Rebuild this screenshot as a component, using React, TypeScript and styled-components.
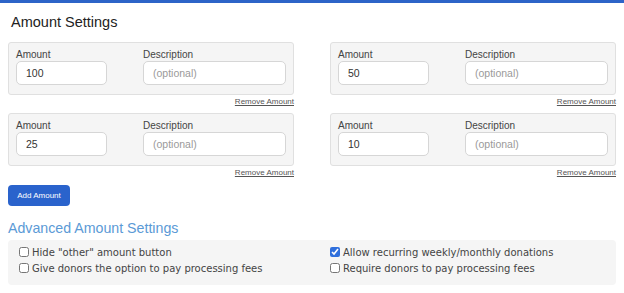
import styled, { createGlobalStyle } from "styled-components";

const GlobalStyle = createGlobalStyle`
  html, body {
    margin: 0;
    padding: 0;
    background: #fff;
  }
  body {
    font-family: "Liberation Sans", Arial, sans-serif;
    color: #333;
  }
`;

const TopBar = styled.div`
  height: 3px;
  background: #2d64c8;
`;

const Page = styled.div`
  width: 608px;
  padding: 0 8px;
`;

const Title = styled.h2`
  margin: 10px 0 0 3px;
  font-size: 14.5px;
  line-height: 18px;
  font-weight: 400;
  color: #222;
`;

const AmountGrid = styled.div`
  display: grid;
  grid-template-columns: 286px 286px;
  column-gap: 36px;
  margin-top: 11px;
`;

const AmountItem = styled.div`
  display: flex;
  flex-direction: column;
`;

const Card = styled.div`
  display: grid;
  grid-template-columns: 91px 143px;
  column-gap: 36px;
  padding: 6px 7px 9px;
  background: #f5f5f5;
  border: 1px solid #e0e0e0;
  border-radius: 3px;
`;

const Field = styled.label`
  display: flex;
  flex-direction: column;
`;

const FieldLabel = styled.span`
  font-size: 10px;
  line-height: 12px;
  color: #444;
`;

const TextInput = styled.input`
  box-sizing: border-box;
  width: 100%;
  height: 24px;
  margin: 0;
  padding: 0 9px;
  border: 1px solid #d6d6d6;
  border-radius: 5px;
  background: #fff;
  font-family: "Liberation Sans", Arial, sans-serif;
  font-size: 10.5px;
  color: #333;
  outline: none;
  &::placeholder {
    color: #9a9a9a;
  }
`;

const RemoveLink = styled.a`
  align-self: flex-end;
  margin: 1px 0 5px;
  font-size: 8px;
  line-height: 12px;
  color: #555;
  text-decoration: underline;
  cursor: pointer;
`;

const AddButton = styled.button`
  margin-top: 1px;
  width: 62px;
  height: 21px;
  padding: 0;
  border: none;
  border-radius: 4px;
  background: #2a63cc;
  color: #fff;
  font-family: "Liberation Sans", Arial, sans-serif;
  font-size: 8px;
  cursor: pointer;
`;

const SubTitle = styled.h3`
  margin: 14px 0 3px;
  font-size: 14.2px;
  line-height: 17px;
  font-weight: 400;
  color: #5b9ad6;
`;

const OptionsPanel = styled.div`
  display: grid;
  grid-template-columns: 311px 1fr;
  padding: 4px 0 9px 11px;
  background: #f5f5f5;
  border-radius: 4px;
`;

const OptionRow = styled.label`
  display: flex;
  align-items: center;
  height: 16px;
  font-family: "DejaVu Sans", Verdana, sans-serif;
  font-size: 10px;
  color: #444;
`;

const Check = styled.input`
  width: 10px;
  height: 10px;
  margin: 0 3px 0 0;
  accent-color: #2f6fdc;
`;

const amounts = ["100", "50", "25", "10"];

const options = [
  { label: 'Hide "other" amount button', checked: false },
  { label: "Allow recurring weekly/monthly donations", checked: true },
  { label: "Give donors the option to pay processing fees", checked: false },
  { label: "Require donors to pay processing fees", checked: false },
];

export default function App() {
  return (
    <>
      <GlobalStyle />
      <TopBar />
      <Page>
        <Title>Amount Settings</Title>
        <AmountGrid>
          {amounts.map((a) => (
            <AmountItem key={a}>
              <Card>
                <Field>
                  <FieldLabel>Amount</FieldLabel>
                  <TextInput defaultValue={a} />
                </Field>
                <Field>
                  <FieldLabel>Description</FieldLabel>
                  <TextInput placeholder="(optional)" />
                </Field>
              </Card>
              <RemoveLink>Remove Amount</RemoveLink>
            </AmountItem>
          ))}
        </AmountGrid>
        <AddButton>Add Amount</AddButton>
        <SubTitle>Advanced Amount Settings</SubTitle>
        <OptionsPanel>
          {options.map((o) => (
            <OptionRow key={o.label}>
              <Check type="checkbox" defaultChecked={o.checked} />
              {o.label}
            </OptionRow>
          ))}
        </OptionsPanel>
      </Page>
    </>
  );
}
